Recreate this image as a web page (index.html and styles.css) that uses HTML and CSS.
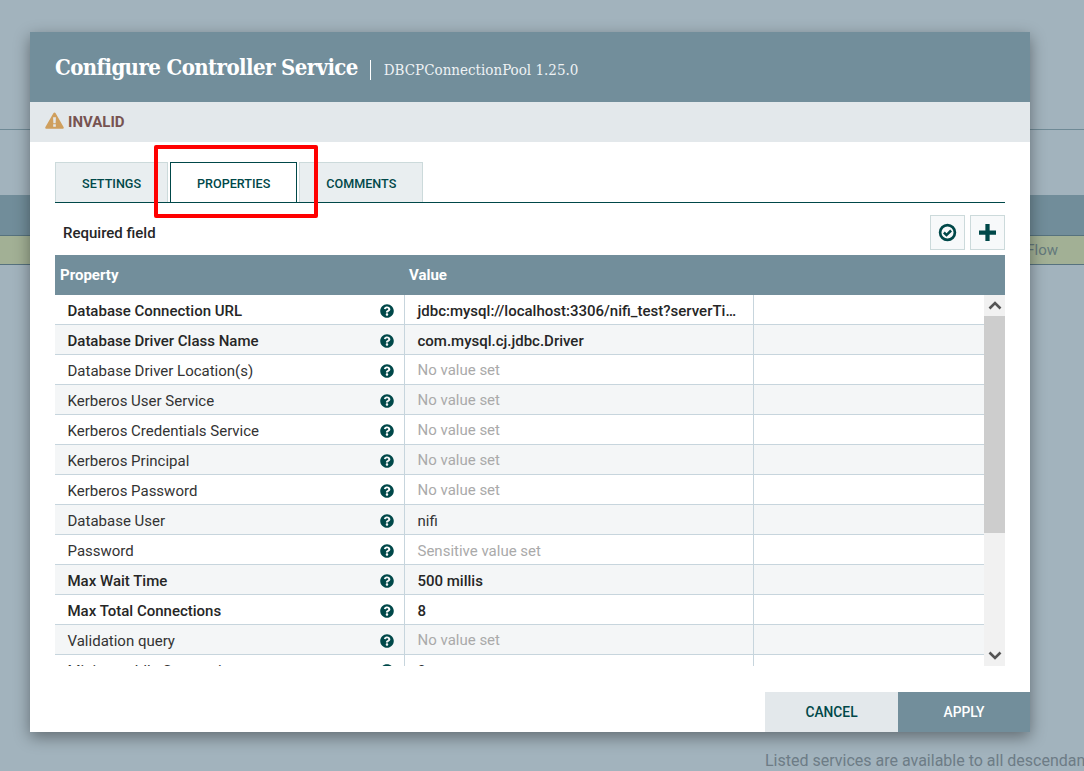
FILE: index.html
```html
<!DOCTYPE html>
<html lang="en">
<head>
    <meta charset="UTF-8">
    <title>Configure Controller Service</title>
    <link rel="stylesheet" href="styles.css">
</head>
<body>
    <svg class="icon-defs" aria-hidden="true">
        <symbol id="help" viewBox="0 0 512 512"><path d="M504 256c0 136.997-111.043 248-248 248S8 392.997 8 256C8 119.083 119.043 8 256 8s248 111.083 248 248zM262.655 90c-54.497 0-89.255 22.957-116.549 63.758-3.536 5.286-2.353 12.415 2.715 16.258l34.699 26.31c5.205 3.947 12.621 3.008 16.665-2.122 17.864-22.658 30.113-35.797 57.303-35.797 20.429 0 45.698 13.148 45.698 32.958 0 14.976-12.363 22.667-32.534 33.976C247.128 238.528 216 254.941 216 296v4c0 6.627 5.373 12 12 12h56c6.627 0 12-5.373 12-12v-1.333c0-28.462 83.186-29.647 83.186-106.667 0-58.002-60.165-102-116.531-102zM256 338c-25.365 0-46 20.635-46 46 0 25.364 20.635 46 46 46s46-20.636 46-46c0-25.365-20.635-46-46-46z"/></symbol>
    </svg>

    <!-- page behind the dialog -->
    <div class="page">
        <div class="page-top"></div>
        <div class="page-band"></div>
        <div class="page-row"><span>Flow</span></div>
        <div class="page-note">Listed services are available to all descendant</div>
    </div>

    <div class="dialog">
        <div class="dialog-header">
            <span class="dialog-title">Configure Controller Service</span>
            <span class="dialog-subtitle">DBCPConnectionPool 1.25.0</span>
        </div>
        <div class="status-bar">
            <svg class="warn-icon" viewBox="0 0 20 18"><path fill-rule="evenodd" d="M10 0.5c.5 0 .9.3 1.2.8l8.4 14.6c.5.9-.1 1.9-1.1 1.9H1.5c-1 0-1.6-1-1.100-1.900L8.800 1.300C9.100.8 9.500.5 10 .5zM8.500 5.500l.3 6.500h2.400l.3-6.500zM8.600 13v2.600h2.800V13z"/></svg>
            <span>INVALID</span>
        </div>

        <div class="dialog-body">
            <div class="tabs">
                <div class="tab">SETTINGS</div>
                <div class="tab active">PROPERTIES</div>
                <div class="tab">COMMENTS</div>
            </div>
            <div class="toolbar">
                <span class="required">Required field</span>
                <button class="tool-btn">
                    <svg width="19" height="19" viewBox="0 0 19 19"><circle cx="9.500" cy="9.500" r="7.400" fill="none" stroke="#004849" stroke-width="2.700"/><path d="M5.900 9.500l2.600 2.600 4.600-4.600" fill="none" stroke="#004849" stroke-width="2.500"/></svg>
                </button>
                <button class="tool-btn">
                    <svg width="17" height="17" viewBox="0 0 16 16"><path d="M6 0h4v6h6v4h-6v6H6v-6H0V6h6z" fill="#004849"/></svg>
                </button>
            </div>

            <div class="grid-header">
                <div class="col-name">Property</div>
                <div class="col-value">Value</div>
            </div>
            <div class="grid-viewport">
                <div class="grid-rows">
                    <div class="row req"><div class="cell-name"><span>Database Connection URL</span><svg class="help"><use href="#help"/></svg></div><div class="cell-value">jdbc:mysql://localhost:3306/nifi_test?serverTimezone=UTC</div><div class="cell-extra"></div></div>
                    <div class="row req"><div class="cell-name"><span>Database Driver Class Name</span><svg class="help"><use href="#help"/></svg></div><div class="cell-value">com.mysql.cj.jdbc.Driver</div><div class="cell-extra"></div></div>
                    <div class="row"><div class="cell-name"><span>Database Driver Location(s)</span><svg class="help"><use href="#help"/></svg></div><div class="cell-value unset">No value set</div><div class="cell-extra"></div></div>
                    <div class="row"><div class="cell-name"><span>Kerberos User Service</span><svg class="help"><use href="#help"/></svg></div><div class="cell-value unset">No value set</div><div class="cell-extra"></div></div>
                    <div class="row"><div class="cell-name"><span>Kerberos Credentials Service</span><svg class="help"><use href="#help"/></svg></div><div class="cell-value unset">No value set</div><div class="cell-extra"></div></div>
                    <div class="row"><div class="cell-name"><span>Kerberos Principal</span><svg class="help"><use href="#help"/></svg></div><div class="cell-value unset">No value set</div><div class="cell-extra"></div></div>
                    <div class="row"><div class="cell-name"><span>Kerberos Password</span><svg class="help"><use href="#help"/></svg></div><div class="cell-value unset">No value set</div><div class="cell-extra"></div></div>
                    <div class="row"><div class="cell-name"><span>Database User</span><svg class="help"><use href="#help"/></svg></div><div class="cell-value">nifi</div><div class="cell-extra"></div></div>
                    <div class="row"><div class="cell-name"><span>Password</span><svg class="help"><use href="#help"/></svg></div><div class="cell-value sensitive">Sensitive value set</div><div class="cell-extra"></div></div>
                    <div class="row req"><div class="cell-name"><span>Max Wait Time</span><svg class="help"><use href="#help"/></svg></div><div class="cell-value">500 millis</div><div class="cell-extra"></div></div>
                    <div class="row req"><div class="cell-name"><span>Max Total Connections</span><svg class="help"><use href="#help"/></svg></div><div class="cell-value">8</div><div class="cell-extra"></div></div>
                    <div class="row"><div class="cell-name"><span>Validation query</span><svg class="help"><use href="#help"/></svg></div><div class="cell-value unset">No value set</div><div class="cell-extra"></div></div>
                    <div class="row"><div class="cell-name"><span>Minimum Idle Connections</span><svg class="help"><use href="#help"/></svg></div><div class="cell-value">0</div><div class="cell-extra"></div></div>
                </div>
                <div class="scrollbar">
                    <div class="scroll-btn"><svg width="14" height="9" viewBox="0 0 14 9"><path d="M1.500 7.500L7 2l5.500 5.500" fill="none" stroke="#555" stroke-width="2.600"/></svg></div>
                    <div class="scroll-track"><div class="scroll-thumb"></div></div>
                    <div class="scroll-btn"><svg width="14" height="9" viewBox="0 0 14 9"><path d="M1.500 1.500L7 7l5.500-5.500" fill="none" stroke="#555" stroke-width="2.600"/></svg></div>
                </div>
            </div>
        </div>

        <div class="dialog-footer">
            <button class="btn-cancel">CANCEL</button>
            <button class="btn-apply">APPLY</button>
        </div>
    </div>

    <div class="highlight"></div>
</body>
</html>
```

FILE: styles.css
```css
html, body {
    margin: 0;
    height: 771px;
    overflow: hidden;
}
body {
    font-family: Roboto, "Liberation Sans", sans-serif;
    background: #a2b3bd;
}
.icon-defs {
    display: none;
}

/* page behind the dialog */
.page {
    height: 771px;
    display: flex;
    flex-direction: column;
}
.page-top {
    height: 129px;
    border-bottom: 1px solid #6f8a96;
    margin-bottom: 65px;
}
.page-band {
    height: 40px;
    background: #718d9a;
    border-bottom: 1px solid #56727e;
}
.page-row {
    height: 28px;
    background: #a2b095;
    border-bottom: 1px solid #56727e;
    text-align: right;
    line-height: 28px;
    font-size: 15px;
    color: #64797c;
    padding-right: 26px;
}
.page-note {
    margin: 486px 0 0 765px;
    font-size: 16px;
    line-height: 20px;
    color: #6d7c86;
    white-space: nowrap;
    width: 319px;
    overflow: hidden;
}

/* dialog */
.dialog {
    position: absolute;
    left: 30px;
    top: 32px;
    width: 1000px;
    height: 700px;
    background: #fff;
    box-shadow: 0 5px 15px rgba(0, 0, 0, 0.4);
    display: flex;
    flex-direction: column;
}
.dialog-header {
    height: 70px;
    background: #728e9b;
    color: #fff;
    padding-left: 25px;
    display: flex;
    align-items: center;
    flex-shrink: 0;
}
.dialog-title {
    font-family: "DejaVu Serif", serif;
    font-stretch: condensed;
    font-weight: bold;
    font-size: 22px;
    letter-spacing: -0.6px;
    padding-right: 12px;
    white-space: nowrap;
}
.dialog-subtitle {
    font-family: "DejaVu Serif", serif;
    font-stretch: condensed;
    font-size: 15px;
    line-height: 20px;
    padding-left: 13px;
    border-left: 1px solid #fff;
    margin-top: 5px;
    color: #eef2f4;
    white-space: nowrap;
}
.status-bar {
    height: 40px;
    background: #e3e8eb;
    display: flex;
    align-items: center;
    padding-left: 15px;
    font-size: 15px;
    font-weight: 700;
    color: #775351;
    flex-shrink: 0;
}
.warn-icon {
    width: 19px;
    height: 17px;
    fill: #cf9f5d;
    margin-right: 4px;
    margin-top: -4px;
}
.dialog-body {
    padding: 20px 25px 0;
    flex: 1;
    min-height: 0;
}

/* tabs */
.tabs {
    display: flex;
    height: 40px;
    border-bottom: 1px solid #004849;
}
.tab {
    font-size: 12.6px;
    font-weight: 500;
    color: #004849;
    background: #e9eef0;
    border: 1px solid #ccdadb;
    border-bottom: none;
    padding: 0 26px;
    line-height: 42px;
    margin-right: 2px;
}
.tab.active {
    background: #fff;
    border-color: #004849;
}

.toolbar {
    height: 52px;
    display: flex;
    align-items: center;
    gap: 5px;
    padding-top: 6px;
    box-sizing: border-box;
}
.required {
    font-size: 15px;
    font-weight: 500;
    color: #262626;
    margin: 2px auto 0 8px;
}
.tool-btn {
    width: 35px;
    height: 35px;
    padding: 0;
    background: #f7f9fa;
    border: 1px solid #ccdadb;
    display: flex;
    align-items: center;
    justify-content: center;
}

/* properties grid */
.grid-header {
    height: 40px;
    background: #728e9b;
    color: #fff;
    font-size: 15px;
    font-weight: 700;
    line-height: 40px;
    display: flex;
}
.col-name {
    width: 349px;
    padding-left: 5px;
    box-sizing: border-box;
}
.col-value {
    padding-left: 5px;
}
.grid-viewport {
    height: 371px;
    display: flex;
    overflow: hidden;
}
.grid-rows {
    flex: 1;
    min-width: 0;
}
.row {
    height: 30px;
    box-sizing: border-box;
    display: flex;
    border-bottom: 1px solid #c7d5dd;
    font-size: 15px;
    line-height: 33px;
    color: #333;
}
.row:nth-child(even) {
    background: #f4f6f7;
}
.row.req {
    font-weight: 500;
    color: #262626;
}
.cell-name {
    width: 350px;
    padding: 0 10px 0 12.500px;
    box-sizing: border-box;
    border-right: 1px solid #c7d5dd;
    display: flex;
    align-items: center;
    justify-content: space-between;
}
.cell-name span {
    line-height: 20px;
    padding-top: 2px;
}
.cell-value {
    width: 349px;
    height: 29px;
    padding: 0 13px 0 12.500px;
    box-sizing: border-box;
    border-right: 1px solid #c7d5dd;
    white-space: nowrap;
    overflow: hidden;
    text-overflow: ellipsis;
}
.cell-value.unset {
    color: #aaa;
    line-height: 31px;
}
.cell-value.sensitive {
    color: #aaa;
}
.cell-extra {
    flex: 1;
}
.help {
    width: 14px;
    height: 14px;
    margin-top: 2px;
    fill: #004849;
    flex-shrink: 0;
}
.scrollbar {
    width: 21px;
    display: flex;
    flex-direction: column;
    background: #f1f1f1;
}
.scroll-btn {
    height: 21px;
    display: flex;
    align-items: center;
    justify-content: center;
    flex-shrink: 0;
}
.scroll-track {
    flex: 1;
}
.scroll-thumb {
    height: 217px;
    background: #cdcdcd;
}

/* footer buttons */
.dialog-footer {
    display: flex;
    justify-content: flex-end;
    flex-shrink: 0;
}
.dialog-footer button {
    width: 133px;
    height: 40px;
    border: none;
    font-family: Roboto, sans-serif;
    font-size: 13.800px;
    font-weight: 500;
}
.btn-cancel {
    background: #e3e8eb;
    color: #004849;
}
.dialog-footer .btn-apply {
    width: 132px;
    background: #728e9b;
    color: #fff;
}

/* annotation drawn over the screenshot */
.highlight {
    position: absolute;
    left: 154px;
    top: 145px;
    width: 156px;
    height: 65px;
    border: 4px solid #f00;
    border-radius: 2px;
}
```
